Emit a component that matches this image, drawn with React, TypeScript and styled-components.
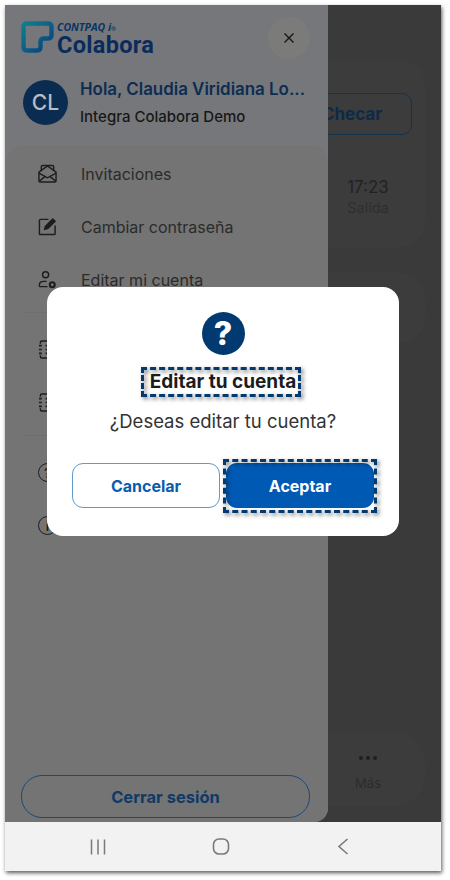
import styled, { createGlobalStyle } from "styled-components";

const Global = createGlobalStyle`
  html, body { margin: 0; padding: 0; background: #fff; }
  body { font-family: "Inter", "Noto Sans", sans-serif; width: 450px; height: 880px; overflow: hidden; }
`;

export default function App() {
  return (
    <>
      <Global />
      <Page>
        <Phone>
          <Stage>
            <Backdrop>
              <StatusCard>
                <CheckButton>Checar</CheckButton>
                <TimeBlock>
                  <Time>17:23</Time>
                  <TimeLabel>Salida</TimeLabel>
                </TimeBlock>
              </StatusCard>
              <EmptyCard />
              <TabBar>
                <MoreDots>
                  <i /><i /><i />
                </MoreDots>
                <MoreLabel>Más</MoreLabel>
              </TabBar>
            </Backdrop>

            <Drawer>
              <DrawerHead>
                <Logo>
                  <LogoMark />
                  <LogoText>
                    <LogoBrand>CONTPAQ i<small>®</small></LogoBrand>
                    <LogoName>Colabora</LogoName>
                  </LogoText>
                </Logo>
                <CloseButton>
                  <svg width="12" height="12" viewBox="0 0 12 12" fill="none" stroke="#161616" strokeWidth="1.4">
                    <path d="M1.5 1.5l9 9M10.5 1.5l-9 9" />
                  </svg>
                </CloseButton>
              </DrawerHead>

              <UserRow>
                <Avatar>CL</Avatar>
                <div>
                  <UserName>Hola, Claudia Viridiana Lo...</UserName>
                  <UserCompany>Integra Colabora Demo</UserCompany>
                </div>
              </UserRow>

              <Menu>
                <MenuItem>
                  <MailIcon />
                  <MenuLabel>Invitaciones</MenuLabel>
                </MenuItem>
                <MenuItem>
                  <EditIcon />
                  <MenuLabel>Cambiar contraseña</MenuLabel>
                </MenuItem>
                <MenuItem>
                  <UserGearIcon />
                  <MenuLabel>Editar mi cuenta</MenuLabel>
                </MenuItem>
                <Divider />
                <MenuItem>
                  <BookIcon />
                </MenuItem>
                <MenuItem>
                  <BookIcon />
                </MenuItem>
                <Divider />
                <MenuItem>
                  <CircleGlyph>?</CircleGlyph>
                </MenuItem>
                <MenuItem>
                  <CircleGlyph>i</CircleGlyph>
                </MenuItem>
                <LogoutButton>Cerrar sesión</LogoutButton>
              </Menu>
            </Drawer>

            <ModalLayer>
              <Modal>
                <QuestionBadge>?</QuestionBadge>
                <ModalTitle>Editar tu cuenta</ModalTitle>
                <ModalText>¿Deseas editar tu cuenta?</ModalText>
                <ModalActions>
                  <CancelButton>Cancelar</CancelButton>
                  <AcceptButton>Aceptar</AcceptButton>
                </ModalActions>
              </Modal>
            </ModalLayer>
          </Stage>

          <NavBar>
            <svg width="16" height="16" viewBox="0 0 16 16" fill="none" stroke="#7a7a7a" strokeWidth="1.5">
              <path d="M1.5 0.5v15M8 0.5v15M14.500 0.5v15" />
            </svg>
            <svg width="18" height="17" viewBox="0 0 18 17" fill="none" stroke="#7a7a7a" strokeWidth="1.6">
              <rect x="1.5" y="1" width="15" height="15" rx="5.5" />
            </svg>
            <svg width="12" height="17" viewBox="0 0 12 17" fill="none" stroke="#7a7a7a" strokeWidth="1.6">
              <path d="M10.5 1L2 8.5l8.5 7.5" />
            </svg>
          </NavBar>
        </Phone>
      </Page>
    </>
  );
}

function LogoMark() {
  return (
    <svg width="33" height="33" viewBox="0 0 33 33" fill="none">
      <defs>
        <linearGradient id="mark" x1="0" y1="0" x2="1" y2="1">
          <stop offset="0" stopColor="#0d7f8c" />
          <stop offset="0.5" stopColor="#0c5f86" />
          <stop offset="1" stopColor="#0a3d7a" />
        </linearGradient>
      </defs>
      <path
        d="M6 2.500H27Q30.500 2.500 30.500 6V14Q30.500 17.500 27 17.500H23Q19.500 17.500 19.500 21V26Q19.500 29.500 16 29.500H6Q2.500 29.500 2.500 26V6Q2.500 2.500 6 2.500Z"
        stroke="url(#mark)"
        strokeWidth="4.4"
        strokeLinejoin="round"
      />
    </svg>
  );
}

function MailIcon() {
  return (
    <MenuIcon viewBox="0 0 20 20">
      <path d="M1 8.500V17.500Q1 19 2.500 19H17.500Q19 19 19 17.500V8.500L10 2 1 8.500Z" />
      <path d="M3.500 7V3Q3.500 1.500 5 1.500H15Q16.500 1.500 16.500 3V7" />
      <path d="M1 9.500L10 14.500 19 9.500M1 18.500L7.500 13M19 18.500L12.500 13" />
    </MenuIcon>
  );
}

function EditIcon() {
  return (
    <MenuIcon viewBox="0 0 20 20">
      <path d="M11 2.500H2.500Q1.500 2.500 1.500 3.500V17.500Q1.500 18.500 2.500 18.500H17Q18 18.500 18 17.500V9" />
      <path d="M7 13l.8-3.200L15.500 2l2.500 2.500-7.800 7.700z" fill="#1d1d1d" />
    </MenuIcon>
  );
}

function UserGearIcon() {
  return (
    <MenuIcon viewBox="0 0 20 20">
      <circle cx="8" cy="5" r="3.200" />
      <path d="M1.500 17.500V15.500Q1.500 12 6 12H9M1.500 17.500H10" />
      <circle cx="15" cy="15.500" r="2.600" strokeWidth="2.200" />
    </MenuIcon>
  );
}

function BookIcon() {
  return (
    <MenuIcon viewBox="0 0 20 20">
      <path d="M2.500 4V2.500Q2.500 1 4 1H16Q17.500 1 17.500 2.500V17.500Q17.500 19 16 19H4Q2.500 19 2.500 17.500V16" />
      <path d="M1 6h3M1 10h3M1 14h3M8 6h6M8 10h6M8 14h6" strokeWidth="1.800" />
    </MenuIcon>
  );
}

const Page = styled.div`
  width: 450px;
  height: 880px;
  padding: 5px 0 0 5px;
  box-sizing: border-box;
`;

const Phone = styled.div`
  width: 436px;
  height: 866px;
  display: flex;
  flex-direction: column;
  box-shadow: 1px 2px 4px rgba(0, 0, 0, 0.65);
  overflow: hidden;
`;

const Stage = styled.div`
  position: relative;
  flex: 1;
  background: #3a3a3a;
  overflow: hidden;
`;

const Backdrop = styled.div`
  height: 100%;
  box-sizing: border-box;
  padding: 55px 16px 16px 16px;
  display: flex;
  flex-direction: column;
`;

const StatusCard = styled.div`
  height: 187px;
  box-sizing: border-box;
  padding: 33px 13px 0 0;
  background: #3c3c3c;
  border-radius: 24px;
  display: flex;
  flex-direction: column;
  align-items: flex-end;
`;

const CheckButton = styled.div`
  width: 130px;
  height: 42px;
  box-sizing: border-box;
  border: 1.5px solid #15324f;
  border-radius: 10px;
  display: flex;
  align-items: center;
  justify-content: center;
  padding-left: 10px;
  font-size: 17px;
  font-weight: 700;
  color: #0e2a47;
`;

const TimeBlock = styled.div`
  width: 90px;
  margin: 41px -1px 0 0;
  display: flex;
  flex-direction: column;
  align-items: center;
`;

const Time = styled.div`
  font-size: 17px;
  line-height: 22px;
  color: #222;
`;

const TimeLabel = styled.div`
  font-size: 14.500px;
  line-height: 20px;
  color: #2f2f2f;
`;

const EmptyCard = styled.div`
  margin-top: 26px;
  height: 70px;
  background: #3c3c3c;
  border-radius: 24px;
`;

const TabBar = styled.div`
  margin-top: auto;
  height: 74px;
  background: #3c3c3c;
  border-radius: 30px;
  display: flex;
  flex-direction: column;
  align-items: flex-end;
  padding: 24px 44px 0 0;
  box-sizing: border-box;
`;

const MoreDots = styled.div`
  display: flex;
  gap: 3px;
  width: 22px;
  justify-content: center;
  margin-right: 2px;

  i {
    width: 4px;
    height: 4px;
    border-radius: 50%;
    background: #1f1f1f;
  }
`;

const MoreLabel = styled.div`
  margin-top: 15px;
  font-size: 13px;
  line-height: 16px;
  color: #2c2c2c;
`;

const Drawer = styled.aside`
  position: absolute;
  top: 0;
  left: 0;
  bottom: 0;
  width: 323px;
  display: flex;
  flex-direction: column;
  background: #76777a;
  border-bottom-right-radius: 14px;
  overflow: hidden;
`;

const DrawerHead = styled.div`
  display: flex;
  align-items: flex-start;
  justify-content: space-between;
  padding: 12px 18px 0 16px;
  height: 66px;
  box-sizing: border-box;
`;

const Logo = styled.div`
  display: flex;
  align-items: flex-start;
  margin-top: 4px;
  gap: 3px;
`;

const LogoText = styled.div`
  display: flex;
  flex-direction: column;
`;

const LogoBrand = styled.div`
  font-family: "Open Sans", sans-serif;
  font-size: 10.500px;
  line-height: 10px;
  font-weight: 700;
  font-style: italic;
  color: #0a3463;
  margin-top: 1px;

  small {
    font-size: 6px;
    font-style: normal;
  }
`;

const LogoName = styled.div`
  font-family: "Roboto", sans-serif;
  font-size: 23.500px;
  line-height: 22px;
  font-weight: 700;
  letter-spacing: 0.3px;
  color: #0a2c5c;
`;

const CloseButton = styled.div`
  width: 42px;
  height: 42px;
  border-radius: 50%;
  background: #7b7b79;
  display: flex;
  align-items: center;
  justify-content: center;
`;

const UserRow = styled.div`
  display: flex;
  align-items: center;
  gap: 12px;
  padding: 0 0 0 18px;
  height: 63px;
`;

const Avatar = styled.div`
  width: 45px;
  height: 45px;
  border-radius: 50%;
  background: #0a2c50;
  color: #b9bcc2;
  display: flex;
  align-items: center;
  justify-content: center;
  font-size: 21px;
  font-weight: 500;
`;

const UserName = styled.div`
  font-size: 16.900px;
  line-height: 24px;
  font-weight: 600;
  color: #0c2d52;
  white-space: nowrap;
`;

const UserCompany = styled.div`
  margin-top: 5px;
  font-size: 15px;
  line-height: 22px;
  font-weight: 500;
  color: #171717;
  white-space: nowrap;
`;

const Menu = styled.div`
  flex: 1;
  margin-top: 11px;
  background: #747474;
  border-radius: 20px 20px 0 0;
  padding: 2px 0 0 0;
  display: flex;
  flex-direction: column;
`;

const MenuItem = styled.div`
  height: 53px;
  flex: none;
  display: flex;
  align-items: center;
  gap: 24px;
  padding-left: 33px;
  box-sizing: border-box;
`;

const MenuIcon = styled.svg`
  width: 19px;
  height: 19px;
  fill: none;
  stroke: #1d1d1d;
  stroke-width: 1.500;
  flex: none;
`;

const CircleGlyph = styled.div`
  width: 19px;
  height: 19px;
  box-sizing: border-box;
  border: 1.500px solid #1d1d1d;
  border-radius: 50%;
  display: flex;
  align-items: center;
  justify-content: center;
  font-size: 13px;
  font-weight: 600;
  color: #1d1d1d;
`;

const MenuLabel = styled.div`
  font-size: 16px;
  line-height: 22px;
  color: #2b2b2b;
`;

const Divider = styled.div`
  height: 1px;
  flex: none;
  margin: 6px 18px 10px;
  background: #6e6e6e;
`;

const LogoutButton = styled.div`
  margin: auto 18px 4px 16px;
  height: 43px;
  box-sizing: border-box;
  border: 1.500px solid #1c4a78;
  border-radius: 21px;
  display: flex;
  align-items: center;
  justify-content: center;
  font-size: 16.500px;
  font-weight: 700;
  color: #0f3a66;
`;

const ModalLayer = styled.div`
  position: absolute;
  inset: 0;
  display: flex;
  justify-content: center;
  align-items: flex-start;
  padding: 282px 0 0 0;
`;

const Modal = styled.div`
  width: 352px;
  height: 249px;
  box-sizing: border-box;
  padding: 25px 25px 0;
  background: #fff;
  border-radius: 16px;
  display: flex;
  flex-direction: column;
  align-items: center;
`;

const QuestionBadge = styled.div`
  width: 43px;
  height: 43px;
  border-radius: 50%;
  background: #003a70;
  color: #fff;
  font-size: 32px;
  font-weight: 800;
  display: flex;
  align-items: center;
  justify-content: center;
`;

const Marked = styled.div`
  position: relative;

  &::after {
    content: "";
    position: absolute;
    border: 3px dashed #003a70;
    filter: drop-shadow(2px 2px 2px rgba(0, 0, 0, 0.55));
    pointer-events: none;
  }
`;

const ModalTitle = styled(Marked)`
  margin-top: 15px;
  font-size: 19px;
  line-height: 24px;
  font-weight: 700;
  color: #1c1c1c;
  white-space: nowrap;

  &::after {
    inset: -3px -5px -3px -9px;
  }
`;

const ModalText = styled.div`
  margin-top: 15px;
  font-size: 18.500px;
  line-height: 24px;
  color: #333;
  white-space: nowrap;
`;

const ModalActions = styled.div`
  margin-top: 30px;
  display: flex;
  gap: 6px;
`;

const ActionButton = styled(Marked)`
  width: 148px;
  height: 45px;
  box-sizing: border-box;
  border-radius: 11px;
  display: flex;
  align-items: center;
  justify-content: center;
  font-size: 16px;
  font-weight: 700;
`;

const CancelButton = styled(ActionButton)`
  background: #fff;
  border: 1.500px solid #5f9acb;
  color: #0b5cad;

  &::after {
    display: none;
  }
`;

const AcceptButton = styled(ActionButton)`
  background: #0059b3;
  color: #fff;

  &::after {
    inset: -4px -3px -5px -3px;
  }
`;

const NavBar = styled.div`
  height: 49px;
  flex: none;
  background: #f2f2f2;
  display: grid;
  grid-template-columns: repeat(3, 122.500px);
  justify-items: center;
  align-items: center;
  padding-left: 32px;
  box-sizing: border-box;
`;
